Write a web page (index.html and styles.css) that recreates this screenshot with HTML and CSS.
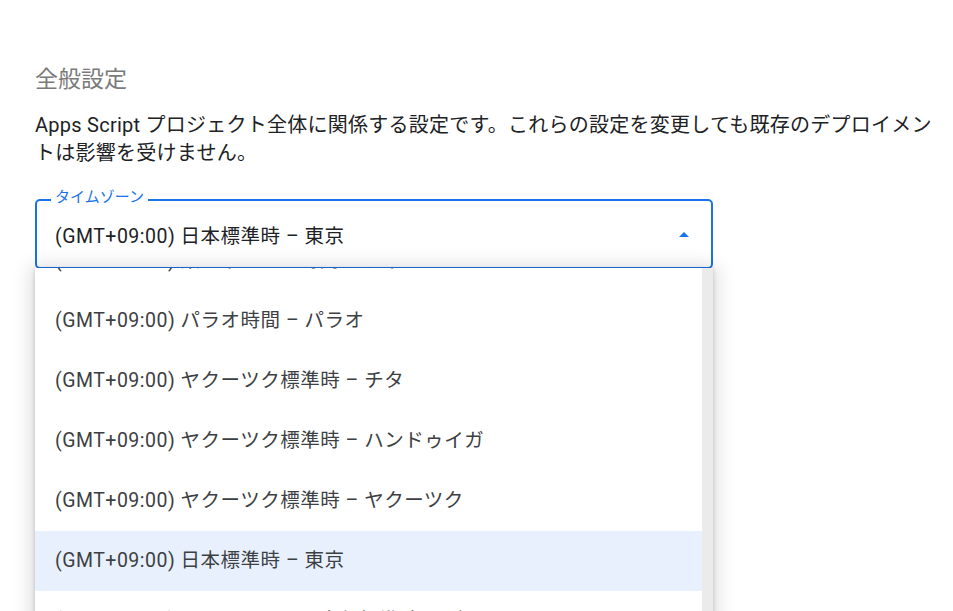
FILE: index.html
```html
<!DOCTYPE html>
<html lang="ja">
<head>
<meta charset="utf-8">
<title>全般設定</title>
<link rel="stylesheet" href="styles.css">
</head>
<body>
<main class="section">
  <h2 class="title">全般設定</h2>
  <p class="desc">Apps Script プロジェクト全体に関係する設定です。これらの設定を変更しても既存のデプロイメントは影響を受けません。</p>
  <div class="select">
    <div class="field">
      <span class="label">タイムゾーン</span>
      <span class="value">(GMT+09:00) 日本標準時 – 東京</span>
      <span class="arrow"></span>
    </div>
    <div class="menu">
      <ul class="list">
        <li class="option">(GMT+09:00) 東ティモール時間 – ディリ</li>
        <li class="option">(GMT+09:00) パラオ時間 – パラオ</li>
        <li class="option">(GMT+09:00) ヤクーツク標準時 – チタ</li>
        <li class="option">(GMT+09:00) ヤクーツク標準時 – ハンドゥイガ</li>
        <li class="option">(GMT+09:00) ヤクーツク標準時 – ヤクーツク</li>
        <li class="option selected">(GMT+09:00) 日本標準時 – 東京</li>
        <li class="option">(GMT+09:30) オーストラリア中部標準時 – ダーウィン</li>
      </ul>
      <div class="track"></div>
    </div>
  </div>
</main>
</body>
</html>
```
FILE: styles.css
```css
html, body {
  height: 100%;
}
body {
  margin: 0;
  padding: 0;
  background: #ffffff;
  font-family: Roboto, "Noto Sans CJK JP", sans-serif;
  color: #202124;
}
.section {
  box-sizing: border-box;
  height: 611px;
  overflow: hidden;
  padding: 62px 12px 0 35px;
}
.title {
  margin: 0;
  font-size: 23px;
  line-height: 36px;
  font-weight: 400;
  color: #7a7a7a;
}
.desc {
  margin: 13px 0 0 0;
  width: 903px;
  font-size: 20px;
  line-height: 28px;
  letter-spacing: 0.25px;
  color: #202124;
}
.select {
  position: relative;
  margin-top: 32px;
  width: 678px;
}
.field {
  position: relative;
  box-sizing: border-box;
  height: 70px;
  border: 2px solid #1a73e8;
  border-radius: 5px;
  background: #ffffff;
  display: flex;
  align-items: center;
  padding: 0 18px;
}
.label {
  position: absolute;
  top: -13px;
  left: 14px;
  padding: 0 4px;
  background: #ffffff;
  font-size: 15px;
  line-height: 18px;
  color: #1a73e8;
}
.value {
  font-size: 19.5px;
  letter-spacing: 0.5px;
  color: #202124;
}
.arrow {
  margin-left: auto;
  margin-right: 4px;
  width: 0;
  height: 0;
  border-left: 5px solid transparent;
  border-right: 5px solid transparent;
  border-bottom: 5px solid #1a73e8;
}
.menu {
  position: absolute;
  top: 69px;
  left: 0;
  width: 678px;
  height: 380px;
  overflow: hidden;
  background: #ffffff;
  display: flex;
  box-shadow: 0 2px 18px 4px rgba(0, 0, 0, 0.14), 0 1px 4px rgba(0, 0, 0, 0.18);
  z-index: 2;
}
.list {
  list-style: none;
  margin: -37px 0 0 0;
  padding: 0;
  flex: 1;
}
.option {
  height: 60px;
  line-height: 60px;
  padding-left: 20px;
  font-size: 19.5px;
  letter-spacing: 0.5px;
  color: #3c4043;
  white-space: nowrap;
}
.option.selected {
  background: #e8f0fe;
}
.track {
  width: 11px;
  background: #ebebeb;
}
```
